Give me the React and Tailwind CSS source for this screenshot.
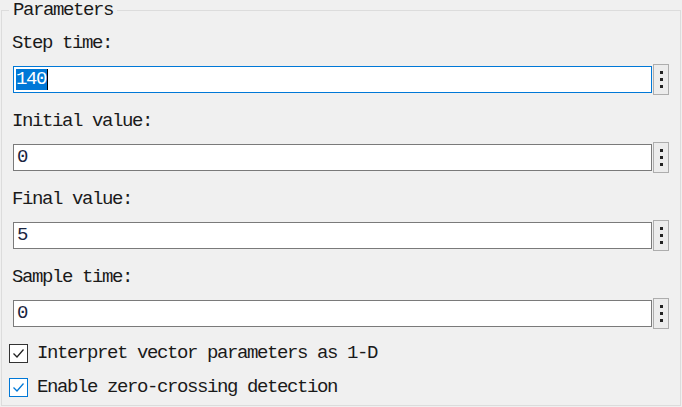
import React from 'react';

const font = { fontFamily: '"Liberation Mono", "DejaVu Sans Mono", monospace' };

function MoreButton() {
  return (
    <button className="ml-[1px] flex h-[31px] w-[16px] flex-col items-center justify-center gap-[4px] border border-[#adadad] bg-[#ececec]">
      <span className="h-[3px] w-[3px] bg-[#222]"></span>
      <span className="h-[3px] w-[3px] bg-[#222]"></span>
      <span className="h-[3px] w-[3px] bg-[#222]"></span>
    </button>
  );
}

function Field({ label, value, focused }) {
  return (
    <div className="mb-[16px]">
      <div className="h-[20px] pl-[10px] leading-[20px] text-[#1a1a1a]">{label}</div>
      <div className="mt-[11px] flex h-[31px] items-center pl-[11px]">
        <div
          className={
            'flex h-[27px] w-[639px] items-center bg-white pl-[2px] leading-[21px] ' +
            (focused ? 'border border-[#0078d7]' : 'border border-[#7a7a7a]')
          }
        >
          {focused ? (
            <>
              <span className="bg-[#0078d7] pr-[1px] text-white">{value}</span>
              <span className="h-[21px] w-[1px] bg-black"></span>
            </>
          ) : (
            <span className="pl-[1px] text-[#1a2540]">{value}</span>
          )}
        </div>
        <MoreButton />
      </div>
    </div>
  );
}

function Check({ label, active }) {
  return (
    <label className="flex h-[34px] items-center pl-[7px]">
      <span
        className={
          'flex h-[19px] w-[19px] items-center justify-center border bg-white ' +
          (active ? 'border-[#0078d7]' : 'border-[#333333]')
        }
      >
        <svg width="13" height="11" viewBox="0 0 13 11">
          <path
            d="M1.5 5.5 L5 9 L11.5 1.5"
            fill="none"
            stroke={active ? '#0078d7' : '#222'}
            strokeWidth="1.3"
          />
        </svg>
      </span>
      <span className="ml-[9px] leading-[20px] text-[#1a1a1a]">{label}</span>
    </label>
  );
}

export default function App() {
  return (
    <div className="h-[407px] w-[682px] bg-[#f0f0f0] pl-[1px] text-[19px] tracking-[-1.4px]" style={font}>
      <fieldset className="h-[406px] w-[680px] border border-[#dcdcdc]">
        <legend className="ml-[7px] px-[4px] leading-[20px] text-[#1a1a1a]">Parameters</legend>
        <div className="pt-[13px]">
          <Field label="Step time:" value="140" focused />
          <Field label="Initial value:" value="0" />
          <Field label="Final value:" value="5" />
          <Field label="Sample time:" value="0" />
          <div className="-mt-[9px]">
            <Check label="Interpret vector parameters as 1-D" />
            <Check label="Enable zero-crossing detection" active />
          </div>
        </div>
      </fieldset>
    </div>
  );
}
